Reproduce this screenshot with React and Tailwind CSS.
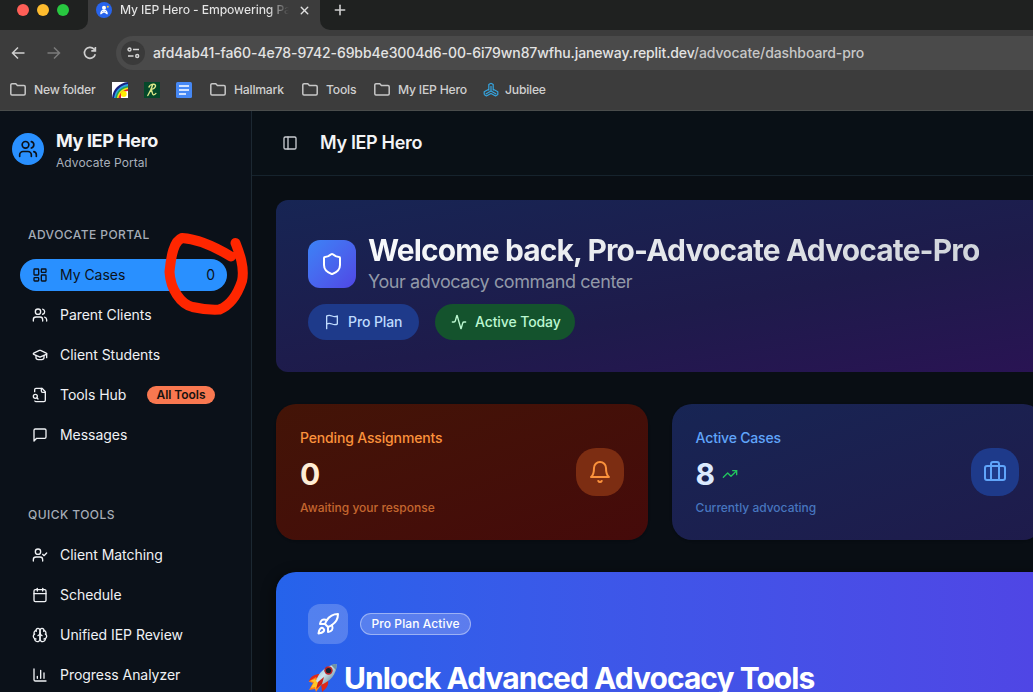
import React from "react";
import { Users, GraduationCap, LayoutDashboard, UserCheck, Calendar, Shield, Activity, Rocket, TrendingUp, PanelLeft, X, Plus } from "lucide-react";

function Icon({ size = 16, className = "", children }) {
  return (
    <svg width={size} height={size} viewBox="0 0 24 24" fill="none" stroke="currentColor" strokeWidth="2" strokeLinecap="round" strokeLinejoin="round" className={`shrink-0 ${className}`}>
      {children}
    </svg>
  );
}

const FileSearch = () => (
  <Icon>
    <path d="M14 2v4a2 2 0 0 0 2 2h4" />
    <path d="M4.268 21a2 2 0 0 0 1.727 1H18a2 2 0 0 0 2-2V7l-5-5H6a2 2 0 0 0-2 2v3" />
    <path d="m9 18-1.5-1.5" />
    <circle cx="5" cy="14" r="3" />
  </Icon>
);
const Message = () => (
  <Icon>
    <path d="M21 15a2 2 0 0 1-2 2H7l-4 4V5a2 2 0 0 1 2-2h14a2 2 0 0 1 2 2z" />
  </Icon>
);
const BrainIcon = () => (
  <Icon>
    <path d="M12 5a3 3 0 1 0-5.997.125 4 4 0 0 0-2.526 5.77 4 4 0 0 0 .556 6.588A4 4 0 1 0 12 18Z" />
    <path d="M12 5a3 3 0 1 1 5.997.125 4 4 0 0 1 2.526 5.77 4 4 0 0 1-.556 6.588A4 4 0 1 1 12 18Z" />
    <path d="M15 13a4.5 4.5 0 0 1-3-4 4.5 4.5 0 0 1-3 4" />
    <path d="M17.599 6.5a3 3 0 0 0 .399-1.375M6.003 5.125A3 3 0 0 0 6.401 6.5M3.477 10.896a4 4 0 0 1 .585-.396M19.938 10.5a4 4 0 0 1 .585.396M6 18a4 4 0 0 1-1.967-.516M19.967 17.484A4 4 0 0 1 18 18" />
  </Icon>
);
const BarChart = () => (
  <Icon>
    <path d="M3 3v16a2 2 0 0 0 2 2h16" />
    <path d="M18 17V9M13 17V5M8 17v-3" />
  </Icon>
);
const FlagIcon = () => (
  <Icon>
    <path d="M4 15s1-1 4-1 5 2 8 2 4-1 4-1V3s-1 1-4 1-5-2-8-2-4 1-4 1z" />
    <path d="M4 22v-7" />
  </Icon>
);
const BellIcon = () => (
  <Icon size={24}>
    <path d="M6 8a6 6 0 0 1 12 0c0 7 3 9 3 9H3s3-2 3-9" />
    <path d="M10.3 21a1.94 1.94 0 0 0 3.4 0" />
  </Icon>
);
const CaseIcon = () => (
  <Icon size={24}>
    <rect x="2" y="6" width="20" height="14" rx="2" />
    <path d="M16 20V4a2 2 0 0 0-2-2h-4a2 2 0 0 0-2 2v16" />
  </Icon>
);

const Folder = () => (
  <svg width="16" height="13" viewBox="0 0 16 13" fill="none" stroke="#c7c7c7" strokeWidth="1.5" strokeLinejoin="round" className="shrink-0">
    <path d="M.8 10.8V2A1.2 1.2 0 0 1 2 .8h3.8l1.6 1.7H14a1.2 1.2 0 0 1 1.2 1.2v7.1A1.2 1.2 0 0 1 14 12H2a1.2 1.2 0 0 1-1.2-1.2z" />
  </svg>
);

function Bookmark({ className, label }) {
  return (
    <div className={`flex shrink-0 items-center gap-2 ${className}`}>
      <Folder />
      <span>{label}</span>
    </div>
  );
}

function Rainbow() {
  return (
    <svg width="16" height="16" viewBox="0 0 16 16" className="shrink-0">
      <rect width="16" height="16" fill="#fff" />
      <path d="M0 16C1 7 7 1 16 0V16z" fill="#16217f" />
      <path d="M2 16C3 8 9 3 16 2V16z" fill="#2f9ee8" />
      <path d="M3.5 16C4.500 9 9 5 16 4V16z" fill="#23a455" />
      <path d="M5 16C6 10 10 6.500 16 5.500V16z" fill="#f8e71c" />
      <path d="M6.500 16C7.500 11 11 8 16 7V16z" fill="#e3242b" />
      <path d="M9 16C9 11 12 9.500 16 9V16z" fill="#fff" />
      <circle cx="11.800" cy="12" r="2.900" fill="#ffee00" />
    </svg>
  );
}

function Bookmarks() {
  return (
    <div className="flex h-[40px] items-center pl-[10px] text-[12.2px] font-medium tracking-[-0.22px] text-[#d0d0d0]">
      <Bookmark label="New folder" className="w-[102px]" />
      <Rainbow />
      <svg width="16" height="16" viewBox="0 0 16 16" fill="none" className="ml-4 shrink-0">
        <rect width="16" height="16" fill="#05482a" />
        <path d="M5 5C5.500 3 8 2 10 2.300c2.600.4 2 4.200-3 5.300M8.500 3.200C7.500 6.500 6 10 3.800 13.500M7 7.600c1.500 1.600 1 4.800 2.300 5.200 1 .2 1.800-.5 2.600-1.400" stroke="#dfe88a" strokeWidth="1.400" strokeLinecap="round" />
      </svg>
      <svg width="16" height="16" viewBox="0 0 16 16" className="ml-4 shrink-0">
        <rect width="16" height="16" rx="1.500" fill="#4688f4" />
        <path d="M3 4h10M3 8h10M3 12h7" stroke="#fff" strokeWidth="1.700" />
      </svg>
      <Bookmark label="Hallmark" className="ml-[18px] w-[92px]" />
      <Bookmark label="Tools" className="w-[72px]" />
      <Bookmark label="My IEP Hero" className="w-[109px]" />
      <svg width="16" height="16" viewBox="0 0 16 16" fill="none" stroke="#35a4df" strokeWidth="1.200" strokeLinejoin="round" className="shrink-0">
        <path d="M5.800 8.500V2.600L8 1.200M10.200 8.500V2.600L8 1.200M8 4v5L2.800 12M8 9l5.200 3M5.800 7.200 1.200 9.800v2.800M1.200 12.600 3.400 14 8 11.500l4.600 2.500 2.200-1.400V9.800l-4.600-2.600" />
      </svg>
      <span className="ml-[6px]">Jubilee</span>
    </div>
  );
}

function Browser() {
  return (
    <header className="h-[111px] shrink-0 border-b border-[#4a4d4c] bg-[#3c3c3c]">
      <div className="flex h-[30px] bg-[#1f2120]">
        <div className="flex w-[88px] items-end bg-[#3c3c3c]">
          <div className="flex h-[30px] w-[88px] gap-2 rounded-br-[10px] bg-[#1f2120] pl-[17px] pt-1">
            <i className="size-3 rounded-full bg-[#ff5f57]" />
            <i className="size-3 rounded-full bg-[#febc2e]" />
            <i className="size-3 rounded-full bg-[#28c840]" />
          </div>
        </div>
        <div className="flex h-[30px] w-[232px] items-start bg-[#3c3c3c] pl-2 pt-[2px]">
          <svg width="16" height="16" viewBox="0 0 16 16" className="shrink-0">
            <circle cx="8" cy="8" r="8" fill="#2864ec" />
            <circle cx="8" cy="5.700" r="2" fill="#fff" />
            <path d="M8 7.500v2.300M8 8.200c-2 0-3 1-3.200 4M8 8.200c2 0 3 1 3.200 4M5.200 11.500 8 9.500l2.800 2" stroke="#fff" strokeWidth="1.300" fill="none" />
            <circle cx="11.800" cy="4.700" r="1" fill="#f7c62f" />
          </svg>
          <span className="ml-2 w-[169px] whitespace-nowrap bg-linear-to-r from-[#e5e5e5] from-88% to-[#3c3c3c] bg-clip-text text-[12.2px] font-medium leading-4 tracking-[-0.12px] text-transparent">My IEP Hero - Empowering Pa</span>
          <X size={13} strokeWidth={2.600} className="ml-[9px] mt-[2px] shrink-0 text-[#e0e0e0]" />
        </div>
        <div className="flex-1 bg-[#3c3c3c]">
          <div className="h-[30px] rounded-bl-[10px] bg-[#1f2120] pl-3 pt-[2px]">
            <Plus size={16} strokeWidth={2.400} className="text-[#d0d0d0]" />
          </div>
        </div>
      </div>
      <div className="flex h-[40px] pt-[6px] text-[#cfcfcf]">
        <div className="flex w-[116px] items-center pl-[11px]">
          <svg width="14" height="14" viewBox="0 0 14 14" fill="none" stroke="currentColor" strokeWidth="1.500"><path d="M13.500 7H2M7 1.500 1.500 7 7 12.500" /></svg>
          <svg width="14" height="14" viewBox="0 0 14 14" fill="none" stroke="#7b7b7b" strokeWidth="1.500" className="ml-[22px]"><path d="M.5 7h11.500M7 1.500 12.500 7 7 12.500" /></svg>
          <svg width="14" height="14" viewBox="0 0 14 14" fill="none" stroke="currentColor" strokeWidth="1.600" className="ml-[22px]"><path d="M12.300 8.200A5.500 5.500 0 1 1 11 3.100l1.200 1.300M12.400.9v4H8.300" /></svg>
        </div>
        <div className="flex h-[34px] flex-1 items-center rounded-l-full bg-[#4a4a4a] pl-[5px]">
          <div className="flex size-6 items-center justify-center rounded-full bg-[#3a3a3a]">
            <svg width="13" height="12" viewBox="0 0 13 12" fill="none" stroke="#d6d6d6" strokeWidth="1.400"><circle cx="2.500" cy="2.500" r="1.500" /><path d="M6 2.500h6M1 9h5.500" /><circle cx="10.200" cy="9" r="1.500" /></svg>
          </div>
          <p className="mb-[2px] ml-2 whitespace-nowrap text-[14px] font-medium tracking-[-0.1px] text-[#e3e3e3]">afd4ab41-fa60-4e78-9742-69bb4e3004d6-00-6i79wn87wfhu.janeway.replit.dev<span className="text-[#c7c7c7]">/advocate/dashboard-pro</span></p>
        </div>
      </div>
      <Bookmarks />
    </header>
  );
}

function NavItem({ icon, label, active, children }) {
  return (
    <div className={`flex h-8 w-[207px] items-center rounded-full px-3 text-sm tracking-[-0.04px] ${active ? "bg-[#2990ff] text-[#0b1119]" : "text-[#f0f2f5]"}`}>
      {icon}
      <span className="ml-3">{label}</span>
      {children}
    </div>
  );
}

function Sidebar() {
  return (
    <aside className="w-[252px] shrink-0 border-r border-[#1c2832] bg-[#0b1119]">
      <div className="flex h-[75px] items-center gap-3 pl-3">
        <div className="flex size-8 items-center justify-center rounded-full bg-[#2990ff] text-[#0b1119]">
          <Users size={20} />
        </div>
        <div className="pt-[7px]">
          <h2 className="text-[18px] font-bold leading-[22px] tracking-[-0.38px] text-[#f3f4f6]">My IEP Hero</h2>
          <p className="text-xs leading-[22px] tracking-[0.08px] text-[#a9b0bb]">Advocate Portal</p>
        </div>
      </div>
      <div className="pl-5 pt-[33px]">
        <h3 className="flex h-8 items-center pl-2 text-xs font-medium tracking-[0.44px] text-[#a5acb6]">ADVOCATE PORTAL</h3>
        <nav className="mt-2 flex flex-col gap-2">
          <NavItem active icon={<LayoutDashboard size={16} className="shrink-0" />} label="My Cases"><span className="ml-auto">0</span></NavItem>
          <NavItem icon={<Users size={16} className="shrink-0" />} label="Parent Clients" />
          <NavItem icon={<GraduationCap size={16} className="shrink-0" />} label="Client Students" />
          <NavItem icon={<FileSearch />} label="Tools Hub">
            <span className="ml-auto flex h-[18px] w-[68px] items-center justify-center rounded-full bg-[#f97850] text-xs font-semibold tracking-[-0.05px] text-[#17120f]">All Tools</span>
          </NavItem>
          <NavItem icon={<Message />} label="Messages" />
        </nav>
        <h3 className="mt-12 flex h-8 items-center pl-2 text-xs font-medium tracking-[0.44px] text-[#a5acb6]">QUICK TOOLS</h3>
        <nav className="mt-2 flex flex-col gap-2">
          <NavItem icon={<UserCheck size={16} className="shrink-0" />} label="Client Matching" />
          <NavItem icon={<Calendar size={16} className="shrink-0" />} label="Schedule" />
          <NavItem icon={<BrainIcon />} label="Unified IEP Review" />
          <NavItem icon={<BarChart />} label="Progress Analyzer" />
        </nav>
      </div>
    </aside>
  );
}

function Welcome() {
  return (
    <section className="h-[172px] w-[1080px] rounded-[12px] bg-linear-[170deg] from-[#172554] via-[#1e1b4b] to-[#2e1057] px-8 pt-8">
      <div className="flex items-center gap-3">
        <div className="flex size-12 items-center justify-center rounded-[12px] bg-linear-to-br from-[#3b82f6] to-[#4f46e5] text-white">
          <Shield size={24} />
        </div>
        <div>
          <h1 className="w-fit whitespace-nowrap bg-linear-to-r from-[#f8f9fb] to-[#d1d5db] bg-clip-text text-[30px] font-bold leading-9 tracking-[-0.89px] text-transparent">Welcome back, Pro-Advocate Advocate-Pro</h1>
          <p className="text-[18px] leading-7 tracking-[-0.4px] text-[#9299a8]">Your advocacy command center</p>
        </div>
      </div>
      <div className="mt-2 flex gap-4 whitespace-nowrap text-sm font-medium tracking-[-0.1px]">
        <div className="flex h-9 w-[111px] items-center gap-2 rounded-full bg-[#1e3a8a] px-4 text-[#bfdbfe]"><FlagIcon />Pro Plan</div>
        <div className="flex h-9 w-[140px] items-center gap-2 rounded-full bg-[#14532d] px-4 text-[#bbf7d0]"><Activity size={16} className="shrink-0" />Active Today</div>
      </div>
    </section>
  );
}

function Stats() {
  return (
    <div className="mt-8 flex gap-6">
      <section className="flex h-[136px] w-[371.600px] shrink-0 items-center justify-between rounded-[20px] bg-linear-to-br from-[#431407] to-[#450a0a] p-6 shadow-sm">
        <div>
          <p className="text-sm font-medium leading-5 tracking-[-0.16px] text-[#fb923c]">Pending Assignments</p>
          <p className="mt-2 text-[30px] font-bold leading-9 tracking-[-0.8px] text-[#ffedd5]">0</p>
          <p className="mt-2 text-xs font-medium leading-4 text-[#c4672f]">Awaiting your response</p>
        </div>
        <div className="flex size-12 items-center justify-center rounded-[20px] bg-[#7c2d12] text-[#fb923c]"><BellIcon /></div>
      </section>
      <section className="flex h-[136px] w-[371.600px] shrink-0 items-center justify-between rounded-[20px] bg-linear-to-br from-[#172554] to-[#1e1b4b] p-6 shadow-sm">
        <div>
          <p className="text-sm font-medium leading-5 tracking-[-0.18px] text-[#60a5fa]">Active Cases</p>
          <div className="mt-2 flex items-center gap-2 text-[30px] font-bold leading-9 tracking-[-0.8px] text-[#dbeafe]">8<TrendingUp size={16} className="text-[#22c55e]" /></div>
          <p className="mt-2 text-xs font-medium leading-4 text-[#4776bf]">Currently advocating</p>
        </div>
        <div className="flex size-12 items-center justify-center rounded-[20px] bg-[#1e3a8a] text-[#60a5fa]"><CaseIcon /></div>
      </section>
    </div>
  );
}

function RocketArt() {
  return (
    <svg width="30" height="30" viewBox="0 0 30 30" className="shrink-0">
      <defs>
        <linearGradient id="hull" x1="0" y1="0" x2="1" y2="1">
          <stop offset="0" stopColor="#6fa3b8" /><stop offset=".45" stopColor="#cfe6ee" /><stop offset="1" stopColor="#426779" />
        </linearGradient>
      </defs>
      <path d="M12 11C7 11 3 13 1 18l8-1zM20 18c1 4-2 8-6 11l-1-9z" fill="#df2918" />
      <path d="M8 14 .5 18.500 5 20 1 27l6-1 1 3 5-7z" fill="#ff7b17" />
      <path d="m7 16-5 2 4 1-3 6 4-1 1 3 3-6z" fill="#ffc62b" />
      <path d="M8 18c2-7 8-15 20.500-17C29 11 22 19 12 22z" fill="url(#hull)" />
      <path d="M23 2c2-.7 4-1 5.500-1 .2 2 0 4-.6 6z" fill="#71939f" />
      <circle cx="20.500" cy="7.500" r="4.200" fill="#b8252b" />
      <circle cx="20.500" cy="7.500" r="2.600" fill="#14222c" />
      <path d="M16 14 10 19l-2 7 6-5z" fill="#cc2018" />
    </svg>
  );
}

function Promo() {
  return (
    <section className="mt-8 h-[300px] w-[1080px] rounded-[20px] bg-linear-to-r from-[#2563eb] to-[#4f46e5] to-70% px-8 pt-8 text-white shadow-[0_4px_12px_4px_#0005]">
      <div className="flex items-center gap-3">
        <div className="flex size-10 items-center justify-center rounded-[12px] bg-white/20"><Rocket size={24} /></div>
        <div className="flex h-[22px] w-[111px] items-center justify-center rounded-full border border-white/40 bg-white/20 text-xs font-medium tracking-[0.1px]">Pro Plan Active</div>
      </div>
      <div className="mt-4 flex h-9 items-center gap-[6px]">
        <RocketArt />
        <h2 className="whitespace-nowrap text-[30px] font-bold leading-9 tracking-[-0.97px]">Unlock Advanced Advocacy Tools</h2>
      </div>
    </section>
  );
}

export default function App() {
  return (
    <div className="relative flex h-[692px] w-[1033px] flex-col overflow-hidden bg-[#090e14] font-['Inter',sans-serif]">
      <Browser />
      <div className="flex min-h-0 flex-1">
        <Sidebar />
        <main className="min-w-0 flex-1 overflow-hidden">
          <div className="flex h-[65px] items-center border-b border-[#16232d] bg-[#091016] pl-[30px] text-[#f3f4f6]">
            <PanelLeft size={16} className="text-[#c9ccd1]" />
            <span className="mb-[2px] ml-[22px] text-[18px] font-semibold tracking-[-0.33px]">My IEP Hero</span>
          </div>
          <div className="pl-6 pt-6">
            <Welcome />
            <Stats />
            <Promo />
          </div>
        </main>
      </div>
      <svg width="90" height="90" viewBox="160 230 90 90" className="pointer-events-none absolute left-[160px] top-[230px]" fill="none" stroke="#ff2600" strokeWidth="10" strokeLinecap="round" strokeLinejoin="round">
        <path d="M231 256.500C217 248 199 239 182 238c-8 3-11 18-12.500 34 1 17 11 32 23 35 9 2 19 3 27 2.500 10-4 18-15 22.500-28.500 3-14-3-29-6.500-38" />
      </svg>
    </div>
  );
}
